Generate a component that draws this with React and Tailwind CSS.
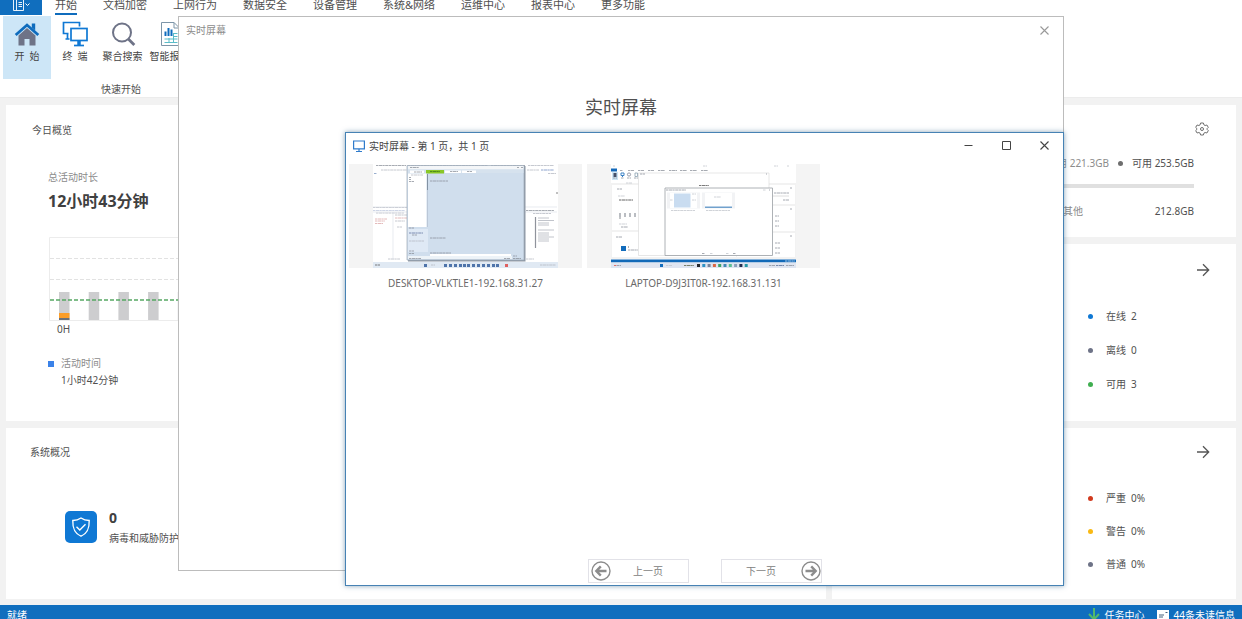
import React from "react";

const TABS = ["开始", "文档加密", "上网行为", "数据安全", "设备管理", "系统&网络", "运维中心", "报表中心", "更多功能"];

function HomeIcon() {
  return (
    <svg width="26" height="26" viewBox="0 0 26 26" fill="none" aria-hidden="true">
      <path d="M4.500 14.500 13 7 21.500 14.500V24.500H15.500V18H10.500V24.500H4.500z" fill="#6e7387" />
      <path d="M1.700 14 13 4l11.300 10" stroke="#0f6cbd" strokeWidth="2.800" />
      <path d="M17.800 2.500H21.200V9.500L17.800 6.500z" fill="#0f6cbd" />
    </svg>
  );
}

function TerminalIcon() {
  return (
    <svg width="26" height="26" viewBox="0 0 26 26" fill="none" stroke="#0f78d4" aria-hidden="true">
      <path d="M6.500 12.500H1.500V1.500H17.500V5.500" strokeWidth="1.700" />
      <path d="M3.500 18H7.500M5.500 13V18" strokeWidth="1.700" />
      <rect x="9" y="7.500" width="16" height="12" strokeWidth="1.700" fill="#fff" />
      <path d="M17 20V24" strokeWidth="3.500" />
      <path d="M12 24.500H22" strokeWidth="1.700" />
    </svg>
  );
}

function SearchIcon() {
  return (
    <svg width="26" height="26" viewBox="0 0 26 26" fill="none" stroke="#6e7387" aria-hidden="true">
      <circle cx="12" cy="11.500" r="9" strokeWidth="2" />
      <path d="M18.300 18l6 6" strokeWidth="2.800" />
    </svg>
  );
}

function ReportIcon() {
  return (
    <svg width="26" height="26" viewBox="0 0 26 26" fill="none" aria-hidden="true">
      <path d="M4.500 1.500H17l5.500 5.500V24.500H4.500z" stroke="#7d95a8" fill="#fff" />
      <path d="M17 1.500V7h5.500" stroke="#7d95a8" />
      <path d="M8.500 15V10.500M11.500 15V7M14.500 15V8.500" stroke="#0f6cbd" strokeWidth="2" />
      <path d="M16.500 12.500h4M16.500 15.500h4M7.500 18h13M7.500 21.500h13M12 17v5M16.500 12v10" stroke="#5bbcc8" />
    </svg>
  );
}

const RIBBON = [
  { label: "开  始", icon: <HomeIcon />, style: "w-12 bg-[#cde6f7]" },
  { label: "终  端", icon: <TerminalIcon />, style: "w-12" },
  { label: "聚合搜索", icon: <SearchIcon />, style: "w-[47px]" },
  { label: "智能报表", icon: <ReportIcon />, style: "w-[47px]" },
];

function Header() {
  return (
    <header className="bg-white">
      <nav className="flex h-[15px] items-stretch text-[11px] leading-[10px] text-[#505050]">
        <button aria-label="文件" className="flex w-[42px] items-start justify-center bg-[#106ebe]">
          <svg width="20" height="12" viewBox="0 0 20 12" fill="none" stroke="#fff" aria-hidden="true">
            <path d="M2.500 0V10.500H12.500V0M5.500 0V10.500M7.500 2.500H11M7.500 4.500H11M7.500 6.500H11" strokeWidth="0.900" />
            <path d="M14.500 3.500l2 2 2-2" />
          </svg>
        </button>
        <div className="ml-[13px] flex gap-[26px]">
          {TABS.map((t, i) => (
            <a key={t} href="#" className={i === 0 ? "border-b-2 border-[#0f6cbd] whitespace-nowrap" : "whitespace-nowrap"}>
              {t}
            </a>
          ))}
        </div>
      </nav>
      <div className="w-[242px] px-[3px] pt-px">
        <div className="flex h-[63px]">
          {RIBBON.map((r) => (
            <button key={r.label} className={"flex shrink-0 flex-col items-center gap-px pt-[5px] text-[10px] leading-4 whitespace-pre text-[#444] " + r.style}>
              {r.icon}
              <span>{r.label}</span>
            </button>
          ))}
        </div>
        <p className="pt-[3px] text-center text-[10px] leading-[15px] text-[#505050]">快速开始</p>
      </div>
    </header>
  );
}

const HOURS = Array.from({ length: 24 }, (_, i) => i);

function ActivityChart() {
  return (
    <svg className="mt-6 ml-px block" width="736" height="84" viewBox="0 0 736 84" fill="none" role="img" aria-label="活动时间">
      <path d="M.5 .5H735.500V83.500H.5z" stroke="#ececec" />
      <path d="M1 21.500H735M1 42.500H735" stroke="#e2e2e2" strokeDasharray="4 2" />
      {HOURS.map((h) => (
        <rect key={h} x={10 + h * 29.7} y="55" width="10.500" height="28" fill="#cdcdcf" />
      ))}
      <rect x="10" y="76" width="10.500" height="5" fill="#fb9d28" />
      <rect x="10" y="81" width="10.500" height="2" fill="#6b7078" />
      <path d="M1 63H735" stroke="#55a863" strokeWidth="1.400" strokeDasharray="4 2" />
    </svg>
  );
}

function Overview() {
  return (
    <section className="bg-white px-[26px] pt-[17px]">
      <h2 className="leading-4">今日概览</h2>
      <div className="pt-[31px] pl-4">
        <p className="leading-4 text-[#8c8c8c]">总活动时长</p>
        <p className="pt-1 text-[16px] leading-6 font-bold text-[#404040]">12小时43分钟</p>
        <ActivityChart />
        <p className="pl-[9px] leading-4">0H</p>
        <dl className="grid grid-cols-[6px_auto] items-center gap-x-[7px] pt-[18px] leading-[17px]">
          <dt className="contents">
            <span className="size-1.5 bg-[#3b82e8]" />
            <span className="text-[#8c8c8c]">活动时间</span>
          </dt>
          <dd className="col-start-2">1小时42分钟</dd>
        </dl>
      </div>
    </section>
  );
}

function SystemStatus() {
  return (
    <section className="bg-white px-6 pt-4">
      <h2 className="leading-4">系统概况</h2>
      <div className="flex gap-3 pt-12 pl-[35px]">
        <span className="mt-[3px] flex size-8 items-center justify-center rounded-[5px] bg-[#0f78d4]">
          <svg width="20" height="22" viewBox="0 0 20 22" fill="none" stroke="#fff" strokeWidth="1.400" aria-hidden="true">
            <path d="M10 2C7.500 3.700 5 4.400 1.800 4.500 1.600 11.500 2.800 17 10 20.200 17.200 17 18.400 11.500 18.200 4.500 15 4.400 12.500 3.700 10 2z" />
            <path d="M5.500 10.800l3.300 3.200 5.700-5.700" />
          </svg>
        </span>
        <div>
          <p className="text-[14px] leading-5 font-bold text-[#404040]">0</p>
          <p className="leading-5">病毒和威胁防护</p>
        </div>
      </div>
    </section>
  );
}

function GearIcon() {
  return (
    <svg width="14" height="14" viewBox="0 0 14 14" fill="none" stroke="#6e6e6e" aria-hidden="true">
      <path d="M5.600 1h2.800l.5 1.800 1.200.7 1.800-.5 1.400 2.400L12 6.700v.6l1.300 1.300-1.400 2.400-1.800-.5-1.200.7-.5 1.800H5.600l-.5-1.800-1.200-.7-1.800.5L.7 8.600 2 7.300v-.6L.7 5.400 2.100 3l1.800.5 1.200-.7z" strokeLinejoin="round" />
      <circle cx="7" cy="7" r="1.500" />
    </svg>
  );
}

function Storage() {
  return (
    <section className="flex flex-col items-end bg-white pr-[42px] pl-6 pt-4">
      <button aria-label="设置" className="-mr-[15px] flex h-4 items-center">
        <GearIcon />
      </button>
      <p className="flex items-center gap-[9px] pt-[18px] leading-4">
        <span className="text-[#8c8c8c]">已用 221.3GB</span>
        <span className="size-[5px] rounded-full bg-[#6e6e6e]" />
        <span>可用 253.5GB</span>
      </p>
      <div className="mt-[13px] h-1 w-full bg-[#e0e0e0]" />
      <p className="flex w-[131px] justify-between pt-[15px] leading-4">
        <span className="text-[#8c8c8c]">其他</span>
        <span>212.8GB</span>
      </p>
    </section>
  );
}

function StatList({ items, pad, gap }) {
  return (
    <section className={"bg-white pr-6 " + pad}>
      <a href="#" aria-label="详情" className="ml-auto flex h-4 w-4 items-center">
        <svg width="14" height="14" viewBox="0 0 14 14" fill="none" stroke="#555" strokeWidth="1.300" aria-hidden="true">
          <path d="M1 7H12.500M7 1.300 12.700 7 7 12.700" />
        </svg>
      </a>
      <ul className={"ml-auto flex w-[124px] flex-col pt-[30px] " + gap}>
        {items.map(([name, value, color]) => (
          <li key={name} className="flex items-center leading-4">
            <span className={"mr-[13px] size-[5px] rounded-full " + color} />
            <span className="mr-[5px]">{name}</span>
            <span>{value}</span>
          </li>
        ))}
      </ul>
    </section>
  );
}

function Marks({ data }) {
  return data.map(([x, y, w, c], i) => (
    <path key={i} d={`M${x} ${y}h${w}`} stroke={c || "#8a8f98"} strokeWidth="1" strokeOpacity="0.75" strokeDasharray="2.300 0.500 3.200 0.400" />
  ));
}

function DesktopShot() {
  const l = "#b3b7c0";
  return (
    <svg width="185" height="104" viewBox="0 0 185 104" fill="none" className="block" aria-hidden="true">
      <path d="M0 0h185v104H0z" fill="#fff" />
      <Marks
        data={[
          [3, 1.500, 30], [35, 1.500, 80], [118, 1.500, 34], [155, 1.500, 26, l], [8, 6, 30, l], [154, 6, 12, l], [168, 6, 13, "#6a85bd"],
          [175, 9.500, 8, l], [1, 9.500, 3, "#7794bd"], [183, 29, 2, "#555"], [0, 43.500, 34, l], [0, 46.500, 32, "#bdc7dd"],
          [3, 49, 28, l], [153, 46.500, 28], [160, 49.500, 18, l], [2, 55, 12, "#dba4a4"], [2, 57, 10, "#dba4a4"],
          [2, 59.500, 8, "#dba4a4"], [22, 51, 12, l], [22, 54, 12, "#dba4a4"], [22, 57, 10, l], [24, 63, 5, l], [15, 95, 12, l],
          [153, 95, 8, l],
        ]}
      />
      <path d="M0 43h34M0 48h34M20 48V95M151 43h33M151 48h33" stroke="#d9dde5" strokeWidth=".6" />
      <path d="M162.500 53V84" stroke="#8f939c" strokeWidth="1.200" />
      {[54, 56.500, 59, 61, 66, 69, 71, 73, 75, 77].map((y, i) => (
        <path key={y} d={`M165 ${y}h${i % 3 === 1 ? 16 : 11}`} stroke="#b1b5be" strokeWidth=".8" />
      ))}
      <path d="M0 98h185v6H0z" fill="#e0e9f3" />
      <Marks data={[[2, 101, 5, "#555"], [58, 101, 4, l], [167, 101, 16, l]]} />
      {[51, 71, 76, 81, 86, 90, 94, 99, 104, 109, 114, 119, 123].map((x) => (
        <rect key={x} x={x} y="100" width="3" height="3" fill="#4f74aa" />
      ))}
      <rect x="132" y="100" width="3" height="3" fill="#df6060" />
      <path d="M35 2H152.500V97.500H35z" fill="#8d97a5" />
      <path d="M34 1.500H151V96H34z" fill="#d0deed" stroke="#9ea9b6" strokeWidth=".7" />
      <path d="M35 2H150.500V5.500H35z" fill="#f4f6f8" />
      <path d="M35 5.500H150.500V9H35z" fill="#d6e2ee" />
      <path d="M37 6.500H51V9H37zM72 6.500H88V9H72zM89 6.500H103V9H89z" fill="#fff" />
      <path d="M53 6H71V9.500H53z" fill="#89c727" />
      <Marks data={[[37, 3.500, 9], [41, 8, 8], [57, 7.500, 10, "#3e7818"], [77, 7.500, 8], [94, 7.500, 5], [144, 3.500, 2], [148, 3.500, 2]]} />
      <path d="M35 9.500H53.500V63H35z" fill="#fff" />
      <path d="M54.500 10v16" stroke="#8392a3" />
      <path d="M54.500 26v37" stroke="#b5c2d1" strokeWidth=".8" />
      <path d="M35 65H55V88H35z" fill="#dfe9f5" />
      <path d="M35 92H139V95H35z" fill="#edf3f8" />
      <path d="M57 90H138V92H57z" fill="#fff" />
      <Marks data={[[38, 11, 12, l], [36, 13.500, 2], [36, 15.500, 2], [36, 17.500, 5], [57, 17, 18], [36, 64, 5], [36, 69, 14, "#5b6f9b"], [39, 71, 5], [36, 77, 15, l], [57, 74, 16], [36, 87, 5], [36, 89.500, 5], [57, 89, 21], [36, 94.500, 12], [131, 94.500, 6], [140, 92, 4], [140, 94.500, 8]]} />
    </svg>
  );
}

function LaptopShot() {
  const l = "#c0c4cb";
  return (
    <svg width="185" height="104" viewBox="0 0 185 104" fill="none" className="block" aria-hidden="true">
      <path d="M0 0h185v104H0z" fill="#fff" />
      <path d="M0 19h185v76H0z" fill="#f2f2f2" />
      <path d="M1 21h124v45H1zM1 68h124v25H1zM126 21h58v19h-58zM126 42h58v25h-58zM126 69h58v24h-58z" fill="#fff" />
      <path d="M0 4.500h6v3H0z" fill="#1268b9" />
      <path d="M1 8h6v8H1z" fill="#cce4f4" />
      <path d="M2.500 9h3v4h-3z" fill="#46516a" />
      <path d="M10 9h3v2.500h-3zM11.500 11.500v1.500" stroke="#3c82c5" />
      <circle cx="18" cy="10.500" r="1.600" stroke="#6e7387" strokeWidth=".7" />
      <path d="M24 9h2.500v3.500H24z" stroke="#7d95a8" strokeWidth=".7" />
      <Marks data={[[2, 2, 2, l], [92, 2, 4, l], [163, 2, 4, l], [176, 2, 2, l], [9, 6.500, 3], [17, 6.500, 6], [27, 6.500, 6], [37, 6.500, 6], [47, 6.500, 7], [58, 6.500, 8], [69, 6.500, 7], [79, 6.500, 7], [90, 6.500, 7], [2, 14, 4], [10, 14, 3], [16, 14, 4], [23, 14, 4], [15, 19, 6, l], [6, 25, 5], [7, 32, 7, l], [8, 36, 14, "#333"], [8, 60, 8, l], [10, 63, 7], [5, 73, 6]]} />
      {[9, 14, 19, 24].map((x) => (
        <path key={x} d={`M${x} 49v4`} stroke="#a3a7ae" strokeWidth="1.500" />
      ))}
      <path d="M9 53v2" stroke="#898c91" />
      <path d="M10 82h5v5h-5z" fill="#126cbc" />
      <Marks data={[[17, 83, 1, "#333"], [17, 86, 10], [179, 24, 2], [163, 29, 15], [172, 36, 6], [179, 45, 2], [164, 52, 4], [164, 57, 4], [164, 62, 4], [179, 72, 2], [164, 79, 5], [164, 84, 5], [164, 89, 5]]} />
      <path d="M162 32H178" stroke="#d5d5d5" strokeWidth=".8" />
      <path d="M27.500 9H158V91.500H27.500z" fill="#fff" stroke="#d6d6d6" strokeWidth=".6" />
      <Marks data={[[29, 10, 5], [155, 10, 1]]} />
      <Marks data={[[88, 21.500, 10, "#4f4f4f"]]} />
      <path d="M54 24H161.500V91.500H54z" fill="#fff" stroke="#a5a9ae" strokeWidth=".9" />
      <path d="M56 28.500h33v16H56zM91 28.500h33v16H91z" fill="#f2f3f5" />
      <path d="M59 29h27v15H59zM94 29h27v15H94z" fill="#fff" />
      <path d="M63 29.500h16.500v14H63z" fill="#c9dcf0" />
      <path d="M94 42.500h27v1.500H94z" fill="#71a1cd" />
      <Marks data={[[55, 26, 20], [152, 26, 3, l], [158, 26, 1], [81, 30, 4, l], [59, 36, 3, l], [81, 36, 4, l], [103, 33, 7, l], [60, 46.500, 24, l], [95, 46.500, 24, l], [91, 89.500, 3], [99, 89.500, 3, l], [115, 89.500, 3, l], [122, 89.500, 3]]} />
      <path d="M0 95.500h185v3H0z" fill="#1169b8" />
      <path d="M0 98.500h185v5.500H0z" fill="#dfe5f1" />
      <Marks data={[[174, 97, 10, "#d0e3f5"], [3, 101.500, 3, "#e14b3f"], [6, 101.500, 4], [55, 101.500, 6, l], [73, 101.500, 10, "#575d3e"], [158, 101.500, 6], [165, 101.500, 8, "#546a93"], [175, 101.500, 8]]} />
      <rect x="49" y="100" width="3" height="3" fill="#126cbc" />
      {["#26292f", "#2d91c5", "#77839b", "#db6745", "#3ba467", "#4388b5", "#59be93", "#8aa0bd", "#222d4f", "#2498a5"].map((c, i) => (
        <rect key={i} x={86 + i * 5.3} y="100" width="3" height="3" fill={c} />
      ))}
    </svg>
  );
}

function CloseIcon() {
  return (
    <svg width="9" height="9" viewBox="0 0 9 9" fill="none" stroke="currentColor" strokeWidth="1.100" aria-hidden="true">
      <path d="M.5 .5l8 8M8.500 .5l-8 8" />
    </svg>
  );
}

function CircleArrow({ flip }) {
  return (
    <svg width="20" height="20" viewBox="0 0 20 20" fill="none" stroke="#8c8c8c" className={flip ? "rotate-180" : ""} aria-hidden="true">
      <circle cx="10" cy="10" r="9" strokeWidth="1.400" />
      <path d="M5.500 10H15.500M9.800 5.300 5.300 10l4.500 4.700" strokeWidth="2.400" />
    </svg>
  );
}

function Screen({ name, children }) {
  return (
    <figure className="w-[233px]">
      <div className="flex justify-center bg-[#f4f4f4]">{children}</div>
      <figcaption className="pt-[7px] text-center leading-4 text-[#6a6a6a]">{name}</figcaption>
    </figure>
  );
}

function PanelWindow() {
  return (
    <div role="dialog" aria-label="实时屏幕" className="absolute top-4 right-[178px] left-[178px] h-[555px] border border-[#bcbcbc] bg-white">
      <div className="flex h-[26px] items-center justify-between pr-3.5 pl-[7px]">
        <span className="leading-4 text-[#8c8c8c]">实时屏幕</span>
        <button aria-label="关闭" className="text-[#999]">
          <CloseIcon />
        </button>
      </div>
      <h1 className="pt-[52px] text-center text-[18px] leading-6 text-[#505050]">实时屏幕</h1>
    </div>
  );
}

function ScreensWindow() {
  return (
    <div role="dialog" aria-label="实时屏幕列表" className="absolute top-[132px] right-[178px] left-[345px] flex h-[454px] flex-col border border-[#4682b4] bg-white shadow-[0_0_5px_rgba(40,90,130,0.55)]">
      <div className="flex h-[25px] items-center pr-3.5 pl-[7px]">
        <svg width="12" height="12" viewBox="0 0 12 12" fill="none" stroke="#2f7bcb" aria-hidden="true">
          <path d="M.6 1H11.400V8.800H.6z" strokeWidth="1.200" />
          <path d="M3 11.500H9M6 9V11" strokeWidth="1.200" />
        </svg>
        <span className="ml-1 leading-4 text-[#444]">实时屏幕 - 第 1 页，共 1 页</span>
        <div className="ml-auto flex items-center gap-[29px] text-[#444]">
          <button aria-label="最小化">
            <svg width="9" height="9" viewBox="0 0 9 9" stroke="currentColor" aria-hidden="true">
              <path d="M.5 4.500h8" />
            </svg>
          </button>
          <button aria-label="最大化">
            <svg width="9" height="9" viewBox="0 0 9 9" fill="none" stroke="currentColor" aria-hidden="true">
              <path d="M.5 .5h8v8H.5z" />
            </svg>
          </button>
          <button aria-label="关闭">
            <CloseIcon />
          </button>
        </div>
      </div>
      <div className="flex gap-[5px] px-[3px] pt-1.5">
        <Screen name="DESKTOP-VLKTLE1-192.168.31.27">
          <DesktopShot />
        </Screen>
        <Screen name="LAPTOP-D9J3IT0R-192.168.31.131">
          <LaptopShot />
        </Screen>
      </div>
      <div className="mt-auto mb-0.5 flex justify-center gap-8 text-[#808080]">
        <button className="flex h-6 w-[101px] items-center border border-[#e2e2e8] px-0.5 leading-4">
          <CircleArrow />
          <span className="flex-1">上一页</span>
        </button>
        <button className="flex h-6 w-[101px] items-center border border-[#e2e2e8] leading-4">
          <span className="flex-1">下一页</span>
          <CircleArrow flip />
        </button>
      </div>
    </div>
  );
}

function StatusBar() {
  return (
    <footer className="flex h-[14px] items-start overflow-hidden bg-[#106ebe] px-[7px] leading-5 text-white">
      <span>就绪</span>
      <a href="#" className="ml-auto flex gap-[5px]">
        <svg width="12" height="14" viewBox="0 0 12 14" fill="none" stroke="#54b86b" strokeWidth="2" className="mt-[3px]" aria-hidden="true">
          <path d="M6 0V11M1 6l5 5.500L11 6" />
        </svg>
        任务中心
      </a>
      <a href="#" className="ml-3 flex gap-[5px]">
        <svg width="12" height="10" viewBox="0 0 12 10" className="mt-[5px]" aria-hidden="true">
          <path d="M0 0h12v9H0z" fill="#fff" />
          <path d="M2 5h5M2 7h4M8.500 2.500h2" stroke="#44607d" />
        </svg>
        44条未读信息
      </a>
    </footer>
  );
}

export default function App() {
  return (
    <div className="relative flex min-h-screen flex-col overflow-hidden bg-[#f2f2f2] font-['Noto_Sans','Noto_Sans_CJK_SC',sans-serif] text-[10px] text-[#505050]">
      <Header />
      <main className="grid flex-1 grid-cols-[67fr_33fr] grid-rows-[316fr_171fr] gap-x-1.5 gap-y-[7px] border-t border-[#ececec] px-1.5 pt-[7px] pb-1.5">
        <Overview />
        <div className="grid grid-rows-[132fr_177fr] gap-[7px]">
          <Storage />
          <StatList
            pad="pt-[18px]"
            gap="gap-[18px]"
            items={[
              ["在线", "2", "bg-[#0f78d4]"],
              ["离线", "0", "bg-[#6e7387]"],
              ["可用", "3", "bg-[#3fae50]"],
            ]}
          />
        </div>
        <SystemStatus />
        <StatList
          pad="pt-4"
          gap="gap-[17px]"
          items={[
            ["严重", "0%", "bg-[#d13a1e]"],
            ["警告", "0%", "bg-[#f9b913]"],
            ["普通", "0%", "bg-[#6e7387]"],
          ]}
        />
      </main>
      <StatusBar />
      <PanelWindow />
      <ScreensWindow />
    </div>
  );
}
